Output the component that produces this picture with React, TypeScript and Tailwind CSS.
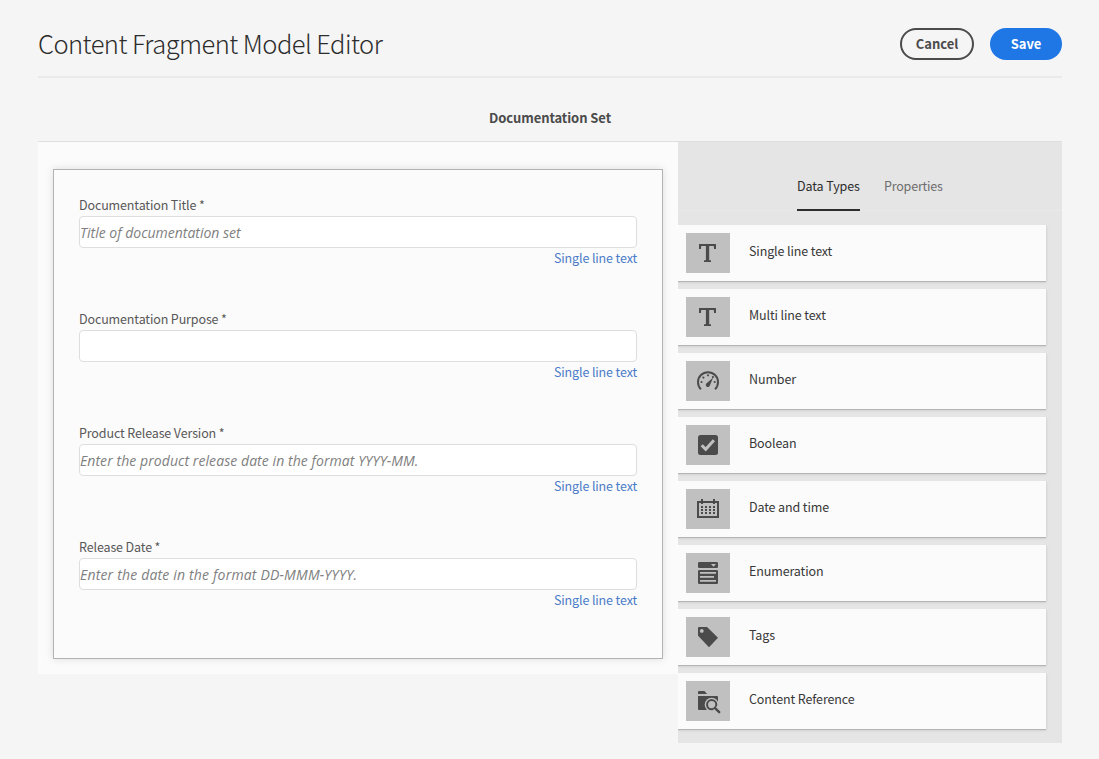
import type { ReactNode } from "react";

type Field = { label: string; placeholder?: string; tracking: string };

const fields: Field[] = [
  { label: "Documentation Title *", placeholder: "Title of documentation set", tracking: "tracking-normal" },
  { label: "Documentation Purpose *", tracking: "tracking-normal" },
  { label: "Product Release Version *", placeholder: "Enter the product release date in the format YYYY-MM.", tracking: "tracking-[0.07px]" },
  { label: "Release Date *", placeholder: "Enter the date in the format DD-MMM-YYYY.", tracking: "tracking-[0.18px]" },
];

const TextIcon = (
  <path d="M13 11h17v5h-2l-.2-2.900h-4.600V27.200H25V29h-7v-1.800h1.900V13.100h-4.700L15 16h-2z" />
);

const NumberIcon = (
  <>
    <path d="M14.900 28.200A10 10 0 1 1 29.100 28.200" fill="none" stroke="#4b4b4b" strokeWidth="2" />
    <circle cx="15.500" cy="21" r="1.100" />
    <circle cx="17.400" cy="16.600" r="1.100" />
    <circle cx="22" cy="14.300" r="1.100" />
    <circle cx="26.900" cy="16" r="1.100" />
    <circle cx="28.700" cy="21" r="1.100" />
    <path d="M27.200 16.400L23.900 24.600A2.100 2.100 0 1 1 20.600 22.300Z" />
  </>
);

const BooleanIcon = (
  <>
    <rect x="12" y="10" width="20" height="20" rx="2.500" />
    <path d="M15.700 20.200L19.700 24.300L27.900 15.200" fill="none" stroke="#c0c0c0" strokeWidth="3" />
  </>
);

const DateIcon = (
  <>
    <path d="M12 13h20v15H12z" fill="none" stroke="#4b4b4b" strokeWidth="2" />
    <path d="M15 10h2v5h-2zM27 10h2v5h-2z" />
    {[17, 20, 23].map((y) =>
      [15, 19, 23, 27].map((x) => <rect key={`${x}-${y}`} x={x} y={y} width="2" height="2" />),
    )}
  </>
);

const EnumerationIcon = (
  <>
    <rect x="12" y="9" width="20" height="6" rx="1.200" />
    <rect x="12" y="17" width="20" height="14" rx="1.200" />
    <path d="M25 11h5l-2.500 2.700zM14 19h16v1.700H14zM14 23h14v1.700H14zM14 27h16v1.700H14z" fill="#c0c0c0" />
  </>
);

const TagsIcon = (
  <>
    <path d="M13 10h7.600a1 1 0 0 1 .7.300L32 20.700 23 30.200 12.300 18.900a1 1 0 0 1-.3-.7V11a1 1 0 0 1 1-1z" />
    <circle cx="15.800" cy="13.900" r="1.900" fill="#c0c0c0" />
  </>
);

const ReferenceIcon = (
  <>
    <path d="M12 13v-2a1 1 0 0 1 1-1h5.200a1 1 0 0 1 .8.400L21 13zM12 15h19a1 1 0 0 1 1 1v13H13a1 1 0 0 1-1-1z" />
    <circle cx="25.700" cy="23.700" r="7" fill="#c0c0c0" />
    <circle cx="25.700" cy="23.700" r="4.600" fill="none" stroke="#4b4b4b" strokeWidth="2" />
    <path d="M29 27l4.300 4.300" fill="none" stroke="#c0c0c0" strokeWidth="5" />
    <path d="M28.800 26.800l4.400 4.400" fill="none" stroke="#4b4b4b" strokeWidth="2.400" strokeLinecap="round" />
  </>
);

const types: { name: string; icon: ReactNode }[] = [
  { name: "Single line text", icon: TextIcon },
  { name: "Multi line text", icon: TextIcon },
  { name: "Number", icon: NumberIcon },
  { name: "Boolean", icon: BooleanIcon },
  { name: "Date and time", icon: DateIcon },
  { name: "Enumeration", icon: EnumerationIcon },
  { name: "Tags", icon: TagsIcon },
  { name: "Content Reference", icon: ReferenceIcon },
];

export default function App() {
  return (
    <div className="h-[759px] w-[1099px] overflow-hidden bg-[#f5f5f5] pr-[37px] pl-[38px] font-['Noto_Sans_CJK_JP','Open_Sans',sans-serif] whitespace-nowrap text-[#4b4b4b]">
      <header className="flex h-[78px] justify-between border-b-2 border-[#eaeaea]">
        <h1 className="mt-[23px] text-[25.5px] leading-10 font-light tracking-[-0.55px] text-[#2c2c2c]">
          Content Fragment Model Editor
        </h1>
        <div className="mt-7 flex gap-4">
          <button className="flex h-8 w-[74px] justify-center rounded-full border-2 border-[#4b4b4b] pt-[2px] text-[13px] leading-6 font-bold">
            Cancel
          </button>
          <button className="flex h-8 w-[72px] justify-center rounded-full bg-[#1f77e5] pt-1 text-[13px] leading-6 font-bold text-white">
            Save
          </button>
        </div>
      </header>

      <h2 className="h-[63px] pt-[30px] text-center text-[13px] leading-5 font-bold tracking-[-0.08px]">Documentation Set</h2>

      <main className="flex items-start">
        <section className="h-[533px] w-[640px] border-t border-[#dedede] bg-[#fbfbfb] pt-[27px] pl-[15px]">
          <div className="h-[490px] w-[610px] border border-[#b3b3b3] px-[25px] pt-[25px] shadow-[0_0_8px_rgba(0,0,0,0.12)]">
            {fields.map((f) => (
              <div key={f.label} className="h-[114px] text-[12.5px]">
                <div className="h-[21px] leading-5 tracking-[-0.13px] text-[#585858]">{f.label}</div>
                <div
                  className={`h-8 rounded border border-[#dedede] bg-white font-['Open_Sans',sans-serif] text-[14px] leading-[31px] text-[#808080] italic ${f.tracking}`}
                >
                  {f.placeholder}
                </div>
                <div className="text-right leading-5 tracking-[-0.13px] text-[#4b7cc8]">Single line text</div>
              </div>
            ))}
          </div>
        </section>

        <aside className="h-[602px] w-[384px] border-t border-[#dedede] bg-[#e5e5e5]">
          <nav className="flex h-[69px] gap-6 border-b border-[#e9e9e9] pt-[34px] pl-[119px] text-[12.5px] leading-5 tracking-[-0.1px]">
            <div className="h-[35px] w-[63px] border-b-2 border-[#2c2c2c] text-[#2c2c2c]">Data Types</div>
            <div className="w-[58px] tracking-[-0.2px] text-[#6e6e6e]">Properties</div>
          </nav>
          <div className="mt-[14px] flex flex-col gap-2">
            {types.map((t) => (
              <div
                key={t.name}
                className="flex h-14 w-[368px] gap-[19px] bg-[#fbfbfb] pt-2 pl-2 shadow-[0_1px_0_#b3b3b3,0_1px_3px_rgba(0,0,0,0.15)] [clip-path:inset(0_-4px_-4px_0)]"
              >
                <svg className="h-10 w-11 bg-[#c0c0c0]" viewBox="0 0 44 40" fill="#4b4b4b">
                  {t.icon}
                </svg>
                <div className="mt-2 text-[12.5px] leading-5 tracking-[-0.12px] text-[#383838]">{t.name}</div>
              </div>
            ))}
          </div>
        </aside>
      </main>
    </div>
  );
}
